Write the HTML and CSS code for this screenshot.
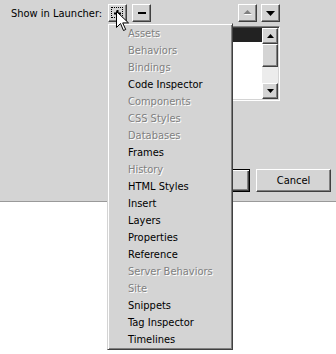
FILE: index.html
```html
<!DOCTYPE html>
<html>
<head>
    <meta charset="utf-8">
    <title>Show in Launcher</title>
    <link rel="stylesheet" href="styles.css">
</head>
<body>
    <div class="dialog">
        <div class="toolbar">
            <span class="label">Show in Launcher:</span>
            <div class="btn small focused">
                <span class="focus-ring"></span>
                <svg width="7" height="7" viewBox="0 0 7 7"><path d="M2.5 0h2v2.5h2.5v2h-2.5v2.5h-2v-2.5h-2.5v-2h2.5z" fill="#000"/></svg>
            </div>
            <div class="btn small">
                <svg width="8" height="2" viewBox="0 0 8 2"><rect width="8" height="2" fill="#000"/></svg>
            </div>
            <div class="spacer"></div>
            <div class="btn small">
                <svg width="9" height="6" viewBox="0 0 9 6"><path d="M5 1l4 4h-8z" fill="#fff"/><path d="M4.5 0l4 4h-8z" fill="#808080"/></svg>
            </div>
            <div class="btn small">
                <svg width="9" height="5" viewBox="0 0 9 5"><path d="M0 0h9l-4.5 5z" fill="#000"/></svg>
            </div>
        </div>

        <div class="listbox">
            <div class="list-body">
                <div class="list-row selected"></div>
            </div>
            <div class="scrollbar">
                <div class="btn scroll-btn">
                    <svg width="7" height="4" viewBox="0 0 7 4"><path d="M3.5 0l3.5 4h-7z" fill="#000"/></svg>
                </div>
                <div class="btn thumb"></div>
                <div class="track"></div>
                <div class="btn scroll-btn">
                    <svg width="7" height="4" viewBox="0 0 7 4"><path d="M0 0h7l-3.5 4z" fill="#000"/></svg>
                </div>
            </div>
        </div>

        <div class="actions">
            <div class="btn push default">OK</div>
            <div class="btn push">Cancel</div>
        </div>
    </div>

    <div class="menu">
        <div class="item off">Assets</div>
        <div class="item off">Behaviors</div>
        <div class="item off">Bindings</div>
        <div class="item">Code Inspector</div>
        <div class="item off">Components</div>
        <div class="item off">CSS Styles</div>
        <div class="item off">Databases</div>
        <div class="item">Frames</div>
        <div class="item off">History</div>
        <div class="item">HTML Styles</div>
        <div class="item">Insert</div>
        <div class="item">Layers</div>
        <div class="item">Properties</div>
        <div class="item">Reference</div>
        <div class="item off">Server Behaviors</div>
        <div class="item off">Site</div>
        <div class="item">Snippets</div>
        <div class="item">Tag Inspector</div>
        <div class="item">Timelines</div>
    </div>

    <svg class="pointer" width="13" height="21" viewBox="0 0 13 21">
        <path d="M0.5 0.5v16l4-4 3 7 2.2-1-3-6.6h5.8z" fill="#fff" stroke="#000" stroke-width="1"/>
    </svg>
</body>
</html>
```

FILE: styles.css
```css
body {
    margin: 0;
    background: #fff;
    font-family: "DejaVu Sans Condensed", "Liberation Sans", Arial, sans-serif;
    font-stretch: condensed;
    font-size: 11px;
    color: #000;
    position: relative;
    height: 354px;
    overflow: hidden;
}
.dialog {
    background: #d4d4d4;
    height: 202px;
    box-sizing: border-box;
    border-bottom: 1px solid #9a9a9a;
    padding: 4px 56px 0 10px;
}
.toolbar {
    display: flex;
    align-items: center;
    height: 18px;
}
.label {
    width: 98px;
    padding-left: 1px;
    box-sizing: border-box;
    white-space: nowrap;
}
.spacer {
    flex: 1;
}
.btn {
    background: #d4d4d4;
    box-sizing: border-box;
    border: 1px solid;
    border-color: #fff #404040 #404040 #fff;
    box-shadow: inset -1px -1px #808080;
    display: flex;
    align-items: center;
    justify-content: center;
    position: relative;
}
.small {
    width: 19px;
    height: 18px;
    margin-right: 5px;
}
.toolbar .small:last-child {
    margin-right: 0;
}
.spacer + .small {
    margin-right: 4px;
}
.focus-ring {
    position: absolute;
    left: 2px;
    top: 2px;
    right: 3px;
    bottom: 3px;
    border: 1px dotted #000;
}
.listbox {
    margin: 4px 0 0 110px;
    width: 160px;
    height: 75px;
    box-sizing: border-box;
    border: 1px solid;
    border-color: #808080 #fff #fff #808080;
    box-shadow: inset 1px 1px #404040, inset -1px -1px #d4d4d4;
    padding: 1px;
    display: flex;
}
.list-body {
    flex: 1;
    background: #fff;
}
.list-row {
    height: 14px;
}
.selected {
    background: #222;
}
.scrollbar {
    width: 16px;
    display: flex;
    flex-direction: column;
}
.scroll-btn {
    height: 16px;
}
.thumb {
    height: 23px;
}
.track {
    flex: 1;
    background: #ececec;
}
.actions {
    display: flex;
    justify-content: flex-end;
    gap: 6px;
    margin: 68px -51px 0 0;
}
.push {
    width: 75px;
    height: 23px;
}
.default {
    border-color: #000;
    box-shadow: inset 1px 1px #fff, inset -1px -1px #404040, inset -2px -2px #808080;
}
.menu {
    position: absolute;
    left: 107px;
    top: 23px;
    width: 126px;
    box-sizing: border-box;
    background: #d4d4d4;
    border: 1px solid;
    border-color: #d4d4d4 #404040 #404040 #d4d4d4;
    box-shadow: inset 1px 1px #fff, inset -1px -1px #808080;
    padding: 1px;
}
.item {
    height: 17px;
    line-height: 17px;
    padding-left: 19px;
    white-space: nowrap;
}
.off {
    color: #808080;
    text-shadow: 1px 1px 0 #fff;
}
.pointer {
    position: absolute;
    left: 116px;
    top: 11px;
}
```
